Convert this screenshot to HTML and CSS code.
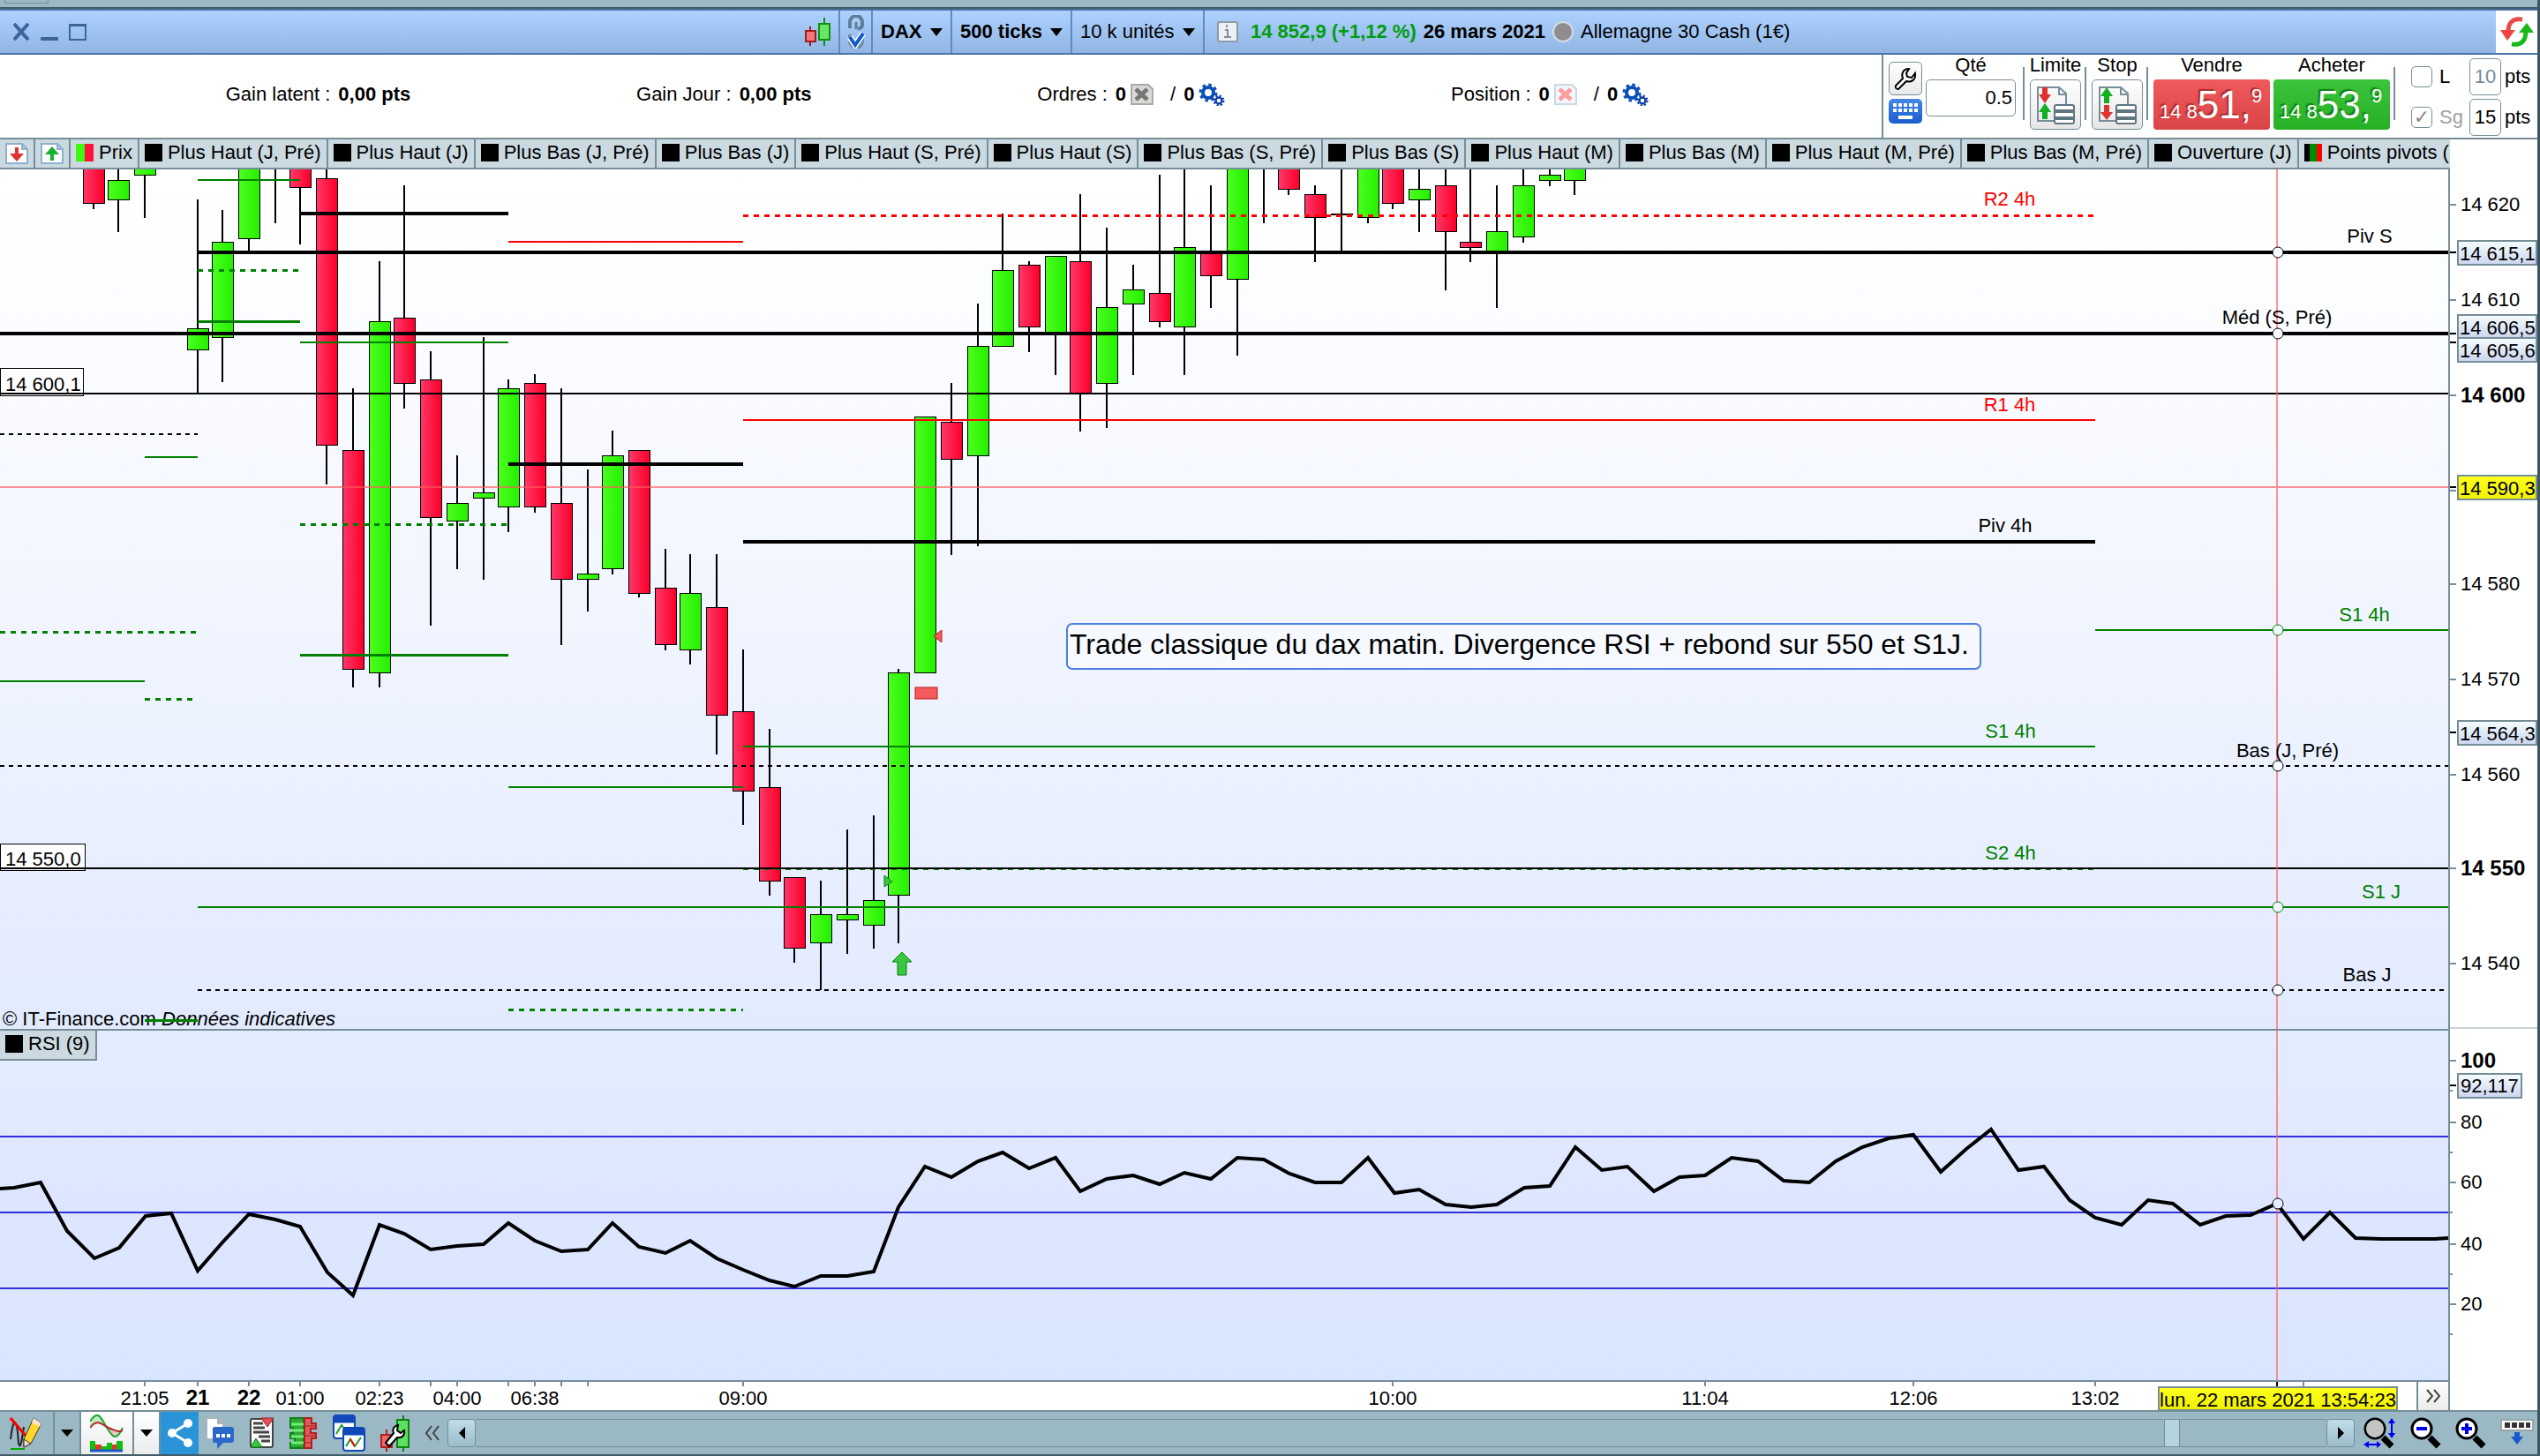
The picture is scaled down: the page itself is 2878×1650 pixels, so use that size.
FILE: index.html
```html
<!DOCTYPE html>
<html lang="fr">
<head>
<meta charset="utf-8">
<title>DAX - 500 ticks</title>
<link rel="stylesheet" href="styles.css">
</head>
<body>
<svg class="defs" width="0" height="0" aria-hidden="true">
  <defs>
    <symbol id="gears" viewBox="0 0 30 26">
      <circle cx="11" cy="11" r="6" fill="none" stroke="#0b4fb8" stroke-width="4"/>
      <circle cx="11" cy="11" r="9" fill="none" stroke="#0b4fb8" stroke-width="3" stroke-dasharray="3.5 3.57"/>
      <circle cx="23" cy="20" r="3.5" fill="none" stroke="#0b3fa8" stroke-width="2.5"/>
      <circle cx="23" cy="20" r="5.5" fill="none" stroke="#0b3fa8" stroke-width="2" stroke-dasharray="2.2 2.12"/>
    </symbol>
    <symbol id="magnifier" viewBox="0 0 36 36">
      <path d="M22 23 L32 33" stroke="#000" stroke-width="7"/>
      <circle cx="13" cy="13" r="11" fill="#fff" stroke="#000" stroke-width="3"/>
    </symbol>
    <linearGradient id="up"><stop offset="0" stop-color="#4eff20"/><stop offset="1" stop-color="#24f000"/></linearGradient>
    <linearGradient id="down"><stop offset="0" stop-color="#ff3a6c"/><stop offset="1" stop-color="#fb0028"/></linearGradient>
    <linearGradient id="priceBg" x2="0" y2="1"><stop offset="0" stop-color="#ffffff"/><stop offset=".25" stop-color="#f9fbff"/><stop offset=".6" stop-color="#eef3ff"/><stop offset="1" stop-color="#e2eafe"/></linearGradient>
    <linearGradient id="rsiBg" x2="0" y2="1"><stop offset="0" stop-color="#e3edff"/><stop offset=".5" stop-color="#dee6ff"/><stop offset="1" stop-color="#d9e5ff"/></linearGradient>
    <linearGradient id="tagBg" x2="0" y2="1"><stop offset="0" stop-color="#f6fdff"/><stop offset="1" stop-color="#cbd5ef"/></linearGradient>
    <linearGradient id="yellowBg" x2="0" y2="1"><stop offset="0" stop-color="#ffff20"/><stop offset="1" stop-color="#f0f000"/></linearGradient>
  </defs>
</svg>

<div class="app">
  <div class="strip"><span class="strip-tab"></span></div>

  <header class="titlebar">
    <div class="win-buttons">
      <button class="win-btn" aria-label="Fermer"><svg width="20" height="20"><path d="M2 1 L18 19 M18 1 L2 19" stroke="#3a6599" stroke-width="4"/></svg></button>
      <button class="win-btn" aria-label="Réduire"><svg width="20" height="20"><rect y="16" width="20" height="4" rx="1" fill="#3a6599"/></svg></button>
      <button class="win-btn" aria-label="Agrandir"><svg width="20" height="20"><path d="M1 2 H19 V19 H1 Z M1 3 H19" fill="none" stroke="#3a6599" stroke-width="2"/></svg></button>
    </div>
    <button class="candle-btn" aria-label="Style du graphique"><svg width="30" height="32"><path d="M7 10 V32" stroke="#a01c1c" stroke-width="2"/><rect x="2" y="15" width="11" height="12" fill="#f07878" stroke="#a01c1c" stroke-width="2"/><path d="M23 0 V32" stroke="#109010" stroke-width="2"/><rect x="17" y="7" width="12" height="18" fill="#66e866" stroke="#109010" stroke-width="2"/></svg></button>
    <button class="cell chain" aria-label="Lier"><svg width="24" height="38"><path d="M5 15 V8 A6 6 0 0 1 19 8 V12 A4 4 0 0 1 14 15" fill="none" stroke="#5f7e9c" stroke-width="4"/><path d="M12 8 V16" stroke="#5f7e9c" stroke-width="3"/><path d="M5 22 V30 A6 6 0 0 0 19 30 V22" fill="none" stroke="#6f8eac" stroke-width="4"/><path d="M5 25 L11 34 L20 21" fill="none" stroke="#fff" stroke-width="7"/><path d="M5 25 L11 34 L20 21" fill="none" stroke="#1458d0" stroke-width="4"/></svg></button>
    <label class="cell drop bold"><select aria-label="Valeur"><option>DAX</option></select></label>
    <label class="cell drop bold"><select aria-label="Unité de temps"><option>500 ticks</option></select></label>
    <label class="cell drop"><select aria-label="Nombre d'unités"><option>10 k unités</option></select></label>
    <div class="cell quote">
      <svg width="24" height="24"><rect x="1" y="1" width="22" height="22" rx="2" fill="#eef1f4" stroke="#8c9aa5" stroke-width="2"/><path d="M9 10 H12 V18 M8 18 H16 M11 4 V7" fill="none" stroke="#7d8f9c" stroke-width="2"/></svg>
      <b class="gain">14 852,9 (+1,12 %)</b>
      <b>26 mars 2021</b>
      <span class="market">Allemagne 30 Cash (1€)</span>
    </div>
    <button class="refresh" aria-label="Actualiser"><svg width="40" height="34"><path d="M26 3 C14 1 10 8 10 17" fill="none" stroke="#e84a4a" stroke-width="5"/><path d="M1 15 H18 L9 27 Z" fill="#ee4444"/><path d="M14 31 C26 33 30 26 30 16" fill="none" stroke="#18b818" stroke-width="5"/><path d="M22 18 H39 L31 7 Z" fill="#18b818"/></svg></button>
  </header>

  <section class="account">
    <div class="stats">
      <p>Gain latent : <b>0,00 pts</b></p>
      <p>Gain Jour : <b>0,00 pts</b></p>
      <p>Ordres : <b>0</b>
        <button class="mini" aria-label="Annuler les ordres"><svg width="26" height="24"><path d="M1 1 H20 L25 6 V23 H1 Z" fill="#d9dad6" stroke="#aaaba6" stroke-width="2"/><path d="M6 6 L19 18 M19 6 L6 18" stroke="#777" stroke-width="5"/></svg></button>
        <span class="slash">/</span> <b>0</b><svg width="30" height="26"><use href="#gears"/></svg></p>
      <p>Position : <b>0</b>
        <button class="mini" aria-label="Clôturer la position"><svg width="26" height="24"><path d="M1 1 H20 L25 6 V23 H1 Z" fill="#f3f7fb" stroke="#c8dae6" stroke-width="2"/><path d="M6 6 L19 18 M19 6 L6 18" stroke="#ff9d9d" stroke-width="5"/></svg></button>
        <span class="slash">/</span> <b>0</b><svg width="30" height="26"><use href="#gears"/></svg></p>
    </div>
    <form class="trade">
      <div class="tools">
        <button type="button" class="tool" aria-label="Réglages"><svg width="26" height="26"><path d="M17 2 C10 2 8 8 10 13 L2 21 Q1 25 5 25 L14 16 C20 18 25 14 24 7 L20 12 L15 11 L14 7 Z" fill="#fff" stroke="#000" stroke-width="2"/></svg></button>
        <button type="button" class="tool keyboard" aria-label="Clavier"><svg width="30" height="20"><path d="M1 3 H30 M1 9 H30" stroke="#fff" stroke-width="4" stroke-dasharray="4 2"/><path d="M7 17 H23" stroke="#fff" stroke-width="4"/></svg></button>
      </div>
      <div class="field"><label for="qty">Qté</label><input id="qty" class="qty" value="0.5"></div>
      <span class="rule first"></span>
      <div class="field"><label for="lim">Limite</label><button id="lim" type="button" class="order"><svg width="44" height="44"><path d="M2 2 H26 L34 9 V40 H2 Z M26 2 V10 H34" fill="none" stroke="#768e98" stroke-width="2"/><path d="M10 2 V12" stroke="#e03030" stroke-width="6"/><path d="M3 10 H17 L10 20 Z" fill="#e03030"/><path d="M10 28 V38" stroke="#10b020" stroke-width="6"/><path d="M3 30 H17 L10 20 Z" fill="#10b020"/><rect x="21" y="22" width="22" height="21" rx="2" fill="#fff" stroke="#5f7681" stroke-width="2"/><path d="M21 29 H43 M21 37 H43" stroke="#5f7681" stroke-width="4"/></svg></button></div>
      <span class="rule"></span>
      <div class="field"><label for="stp">Stop</label><button id="stp" type="button" class="order"><svg width="44" height="44"><path d="M2 2 H26 L34 9 V40 H2 Z M26 2 V10 H34" fill="none" stroke="#768e98" stroke-width="2"/><path d="M10 10 V20" stroke="#10b020" stroke-width="6"/><path d="M3 12 H17 L10 2 Z" fill="#10b020"/><path d="M10 22 V32" stroke="#e03030" stroke-width="6"/><path d="M3 30 H17 L10 39 Z" fill="#e03030"/><rect x="21" y="22" width="22" height="21" rx="2" fill="#fff" stroke="#5f7681" stroke-width="2"/><path d="M21 29 H43 M21 37 H43" stroke="#5f7681" stroke-width="4"/></svg></button></div>
      <span class="rule"></span>
      <div class="field"><label for="sell">Vendre</label><button id="sell" type="button" class="deal sell"><small>14 8</small><span>51,</span><sup>9</sup></button></div>
      <div class="field"><label for="buy">Acheter</label><button id="buy" type="button" class="deal buy"><small>14 8</small><span>53,</span><sup>9</sup></button></div>
      <span class="rule"></span>
      <div class="guards">
        <div class="guard"><label><input type="checkbox">L</label><input class="pts dim" value="10" aria-label="Limite en points"><span>pts</span></div>
        <div class="guard"><label class="off"><input type="checkbox" checked>Sg</label><input class="pts" value="15" aria-label="Stop en points"><span>pts</span></div>
      </div>
    </form>
  </section>

  <nav class="legend">
    <button class="doc" aria-label="Réduire les prix"><svg width="26" height="24"><path d="M1 1 H19 L25 7 V23 H1 Z M19 1 V7 H25" fill="#fff" stroke="#8fb0cf" stroke-width="2"/><path d="M13 5 V13" stroke="#e03030" stroke-width="4"/><path d="M5 12 H21 L13 21 Z" fill="#e03030"/></svg></button>
    <button class="doc" aria-label="Agrandir les prix"><svg width="26" height="24"><path d="M1 1 H19 L25 7 V23 H1 Z M19 1 V7 H25" fill="#fff" stroke="#8fb0cf" stroke-width="2"/><path d="M13 11 V20" stroke="#18b030" stroke-width="4"/><path d="M5 13 H21 L13 4 Z" fill="#18b030"/></svg></button>
    <button><i class="price"></i>Prix</button>
    <button><i></i>Plus Haut (J, Pré)</button>
    <button><i></i>Plus Haut (J)</button>
    <button><i></i>Plus Bas (J, Pré)</button>
    <button><i></i>Plus Bas (J)</button>
    <button><i></i>Plus Haut (S, Pré)</button>
    <button><i></i>Plus Haut (S)</button>
    <button><i></i>Plus Bas (S, Pré)</button>
    <button><i></i>Plus Bas (S)</button>
    <button><i></i>Plus Haut (M)</button>
    <button><i></i>Plus Bas (M)</button>
    <button><i></i>Plus Haut (M, Pré)</button>
    <button><i></i>Plus Bas (M, Pré)</button>
    <button><i></i>Ouverture (J)</button>
    <button><i class="pivots"></i>Points pivots (</button>
  </nav>

  <main class="chart">
    <svg class="pane" viewBox="0 192 2875 974" role="img" aria-label="Cours du DAX">
      <rect y="192" width="2775" height="974" fill="url(#priceBg)"/>
      <text x="3" y="1162">© IT-Finance.com <tspan font-style="italic">Données indicatives</tspan></text>
      <g class="crisp">
        <path class="wick" d="M106 192V237M134 192V263M164 192V247M224 226V445M252 238V433M282 192V285M312 192V253M340 192V277M370 192V549M400 440V779M430 296V779M458 210V463M488 398V709M518 516V645M548 382V657M576 430V603M606 424V581M636 440V731M666 532V693M694 488V651M724 510V677M754 622V737M782 628V753M812 628V855M842 736V935M872 826V1015M900 994V1091M930 998V1122M960 940V1081M990 924V1075M1018 758V1069M1078 434V629M1108 344V619M1136 242V392M1166 296V399M1196 290V425M1224 220V489M1254 258V485M1284 300V425M1314 198V371M1342 192V425M1372 210V349M1402 192V403M1432 192V253M1460 192V221M1490 210V297M1520 192V284M1550 192V253M1578 192V237M1608 192V263M1638 192V329M1666 192V297M1696 210V349M1726 192V275M1756 192V211M1784 192V221"/>
        <g class="up">
          <rect x="122" y="204" width="24" height="22"/><rect x="152" y="180" width="24" height="18"/><rect x="212" y="372" width="24" height="24"/><rect x="240" y="274" width="24" height="108"/><rect x="270" y="180" width="24" height="90"/><rect x="418" y="364" width="24" height="398"/><rect x="506" y="570" width="24" height="20"/><rect x="536" y="558" width="24" height="6"/><rect x="564" y="440" width="24" height="134"/><rect x="654" y="650" width="24" height="6"/><rect x="682" y="516" width="24" height="128"/><rect x="770" y="672" width="24" height="64"/><rect x="918" y="1036" width="24" height="32"/><rect x="948" y="1036" width="24" height="6"/><rect x="978" y="1020" width="24" height="28"/><rect x="1006" y="762" width="24" height="252"/><rect x="1036" y="472" width="24" height="290"/><rect x="1096" y="392" width="24" height="124"/><rect x="1124" y="306" width="24" height="86"/><rect x="1184" y="290" width="24" height="86"/><rect x="1242" y="348" width="24" height="86"/><rect x="1272" y="328" width="24" height="16"/><rect x="1330" y="280" width="24" height="90"/><rect x="1390" y="180" width="24" height="136"/><rect x="1538" y="180" width="24" height="66"/><rect x="1596" y="214" width="24" height="12"/><rect x="1684" y="262" width="24" height="23"/><rect x="1714" y="210" width="24" height="58"/><rect x="1744" y="198" width="24" height="6"/><rect x="1772" y="180" width="24" height="24"/>
        </g>
        <g class="down">
          <rect x="94" y="180" width="24" height="50"/><rect x="328" y="180" width="24" height="32"/><rect x="358" y="202" width="24" height="302"/><rect x="388" y="510" width="24" height="248"/><rect x="446" y="360" width="24" height="74"/><rect x="476" y="430" width="24" height="156"/><rect x="594" y="434" width="24" height="140"/><rect x="624" y="570" width="24" height="86"/><rect x="712" y="510" width="24" height="162"/><rect x="742" y="666" width="24" height="64"/><rect x="800" y="688" width="24" height="122"/><rect x="830" y="806" width="24" height="90"/><rect x="860" y="892" width="24" height="106"/><rect x="888" y="994" width="24" height="80"/><rect x="1066" y="478" width="24" height="42"/><rect x="1154" y="300" width="24" height="70"/><rect x="1212" y="296" width="24" height="149"/><rect x="1302" y="332" width="24" height="32"/><rect x="1360" y="286" width="24" height="26"/><rect x="1448" y="180" width="24" height="34"/><rect x="1478" y="220" width="24" height="26"/><rect x="1508" y="242" width="24" height="1"/><rect x="1566" y="180" width="24" height="50"/><rect x="1626" y="210" width="24" height="52"/><rect x="1654" y="274" width="24" height="6"/>
        </g>
        <g fill="none" stroke="#008000">
          <path stroke-width="2" d="M224 204H340M340 388H576M164 518H224M0 772H164M842 846H2374M576 892H842M224 1028H2775M2374 714H2775"/>
          <path stroke-width="3" d="M224 364.5H340M340 742.5H576M164 1156.5H224"/>
          <path stroke-width="3" stroke-dasharray="6 6" d="M224 306.5H340M340 594.5H576M0 716.5H224M164 792.5H219M576 1144.5H842"/>
          <path stroke-width="2" stroke-dasharray="6 6" d="M842 985H2374"/>
        </g>
        <g fill="none" stroke="#ff0000">
          <path stroke-width="2" d="M576 274H842M842 476H2374"/>
          <path stroke-width="3" stroke-dasharray="6 6" d="M842 244.5H2374"/>
        </g>
        <g fill="none" stroke="#000">
          <path stroke-width="4" d="M340 242H576M224 286H2775M0 378H2775M576 526H842M842 614H2374"/>
          <path stroke-width="2" stroke-dasharray="5 5" d="M0 492H224M0 868H2775M224 1122H2775"/>
        </g>
      </g>
      <g class="crisp">
        <rect x="0" y="417" width="94" height="31" fill="#fff" stroke="#000"/>
        <rect x="0" y="956" width="96" height="30" fill="#fff" stroke="#000"/>
        <path d="M0 446H2775M0 984H2775" stroke="#000" stroke-width="2"/>
        <path d="M0 552H2775M2580 192V1166" stroke="#ff5a5a" stroke-opacity=".65" stroke-width="2"/>
      </g>
      <text x="6" y="443">14 600,1</text>
      <text x="6" y="981">14 550,0</text>

      <g fill="#f25a5e" stroke="#c01818" stroke-width="1"><path d="M1058 721 L1067 714 V728 Z"/><rect x="1037" y="779" width="25" height="13"/></g>
      <g fill="#38c840" stroke="#0a7a10"><path d="M1002 992 V1005 L1011 999 Z"/><path d="M1022 1079 L1033 1090 H1027 V1105 H1017 V1090 H1011 Z"/></g>

      <rect x="1209" y="707" width="1035" height="51" rx="6" fill="#f6f9ff" stroke="#4c7fe0" stroke-width="2"/>
      <text class="note" x="1212" y="741">Trade classique du dax matin. Divergence RSI + rebond sur 550 et S1J.</text>

      <g text-anchor="middle">
        <g fill="#ff0000"><text x="2277" y="233">R2 4h</text><text x="2277" y="466">R1 4h</text></g>
        <g fill="#008000"><text x="2278" y="836">S1 4h</text><text x="2278" y="974">S2 4h</text><text x="2679" y="704">S1 4h</text><text x="2698" y="1018">S1 J</text></g>
        <text x="2272" y="603">Piv 4h</text><text x="2685" y="275">Piv S</text><text x="2580" y="367">Méd (S, Pré)</text><text x="2592" y="858">Bas (J, Pré)</text><text x="2682" y="1112">Bas J</text>
      </g>
      <g fill="#f6f9ff" stroke="#000"><circle cx="2581" cy="286" r="6"/><circle cx="2581" cy="378" r="6"/><circle cx="2581" cy="868" r="6"/><circle cx="2581" cy="1122" r="6"/></g>
      <g fill="#f0f5ff" stroke="#008000"><circle cx="2581" cy="714" r="6"/><circle cx="2581" cy="1028" r="6"/></g>

      <g class="crisp">
        <path d="M2775 192V1166M2776 232H2783M2776 340H2783M2776 448H2783M2776 556H2783M2776 662H2783M2776 770H2783M2776 878H2783M2776 984H2783M2776 1092H2783" stroke="#768e98" stroke-width="2"/>
        <path d="M2776 286H2783M2776 378H2783M2776 388H2783M2776 552H2783M2776 830H2783" stroke="#000" stroke-width="2"/>
        <path d="M2776 1165H2875" stroke="#c8d3d7" stroke-width="2"/>
        <g fill="url(#tagBg)" stroke="#768e98" stroke-width="2">
          <rect x="2785" y="273" width="89" height="27"/><rect x="2785" y="357" width="89" height="26"/><rect x="2785" y="383" width="89" height="27"/><rect x="2785" y="817" width="89" height="27"/>
          <rect x="2785" y="539" width="89" height="27" fill="url(#yellowBg)"/>
        </g>
      </g>
      <text x="2788" y="239">14 620</text><text x="2788" y="347">14 610</text><text x="2788" y="669">14 580</text><text x="2788" y="777">14 570</text><text x="2788" y="885">14 560</text><text x="2788" y="1099">14 540</text>
      <text x="2787" y="295">14 615,1</text><text x="2787" y="379">14 606,5</text><text x="2787" y="405">14 605,6</text><text x="2787" y="561">14 590,3</text><text x="2787" y="839">14 564,3</text>
      <text class="strong" x="2788" y="456">14 600</text><text class="strong" x="2788" y="992">14 550</text>
    </svg>

    <div class="rsi">
      <svg class="pane" viewBox="0 1166 2875 400" role="img" aria-label="RSI">
        <rect y="1166" width="2775" height="400" fill="url(#rsiBg)"/>
        <g class="crisp">
          <path d="M0 1167H2775M2775 1166V1566M0 1565H2776" stroke="#768e98" stroke-width="2"/>
          <path d="M0 1288H2774M0 1374H2774M0 1460H2774" stroke="#3030d8" stroke-width="2"/>
          <path d="M2580 1168V1564" stroke="#ff5a5a" stroke-opacity=".65" stroke-width="2"/>
          <path d="M2776 1202H2783M2776 1272H2783M2776 1340H2783M2776 1410H2783M2776 1478H2783M2776 1236H2779M2776 1306H2779M2776 1374H2779M2776 1444H2779M2776 1512H2779" stroke="#768e98" stroke-width="2"/>
          <path d="M2776 1230H2783" stroke="#000" stroke-width="2"/>
          <rect x="2785" y="1217" width="72" height="27" fill="url(#tagBg)" stroke="#768e98" stroke-width="2"/>
        </g>
        <polyline fill="none" stroke="#000" stroke-width="4" points="0,1347 16,1346 46,1340 76,1395 107,1426 135,1414 165,1378 194,1375 224,1440 252,1408 282,1376 312,1382 340,1390 371,1442 400,1468 430,1388 458,1398 488,1416 518,1412 548,1410 576,1386 606,1406 636,1418 666,1416 694,1386 724,1413 754,1420 782,1406 812,1426 842,1439 872,1451 900,1458 930,1446 960,1446 990,1441 1018,1368 1048,1322 1078,1334 1108,1316 1136,1306 1166,1324 1196,1312 1224,1350 1254,1336 1284,1332 1314,1342 1342,1329 1372,1336 1402,1312 1432,1314 1461,1330 1490,1340 1520,1340 1550,1312 1580,1352 1608,1348 1638,1365 1667,1368 1696,1365 1727,1346 1756,1344 1785,1300 1815,1326 1844,1322 1874,1350 1903,1334 1932,1332 1962,1312 1992,1316 2021,1338 2050,1340 2080,1316 2110,1300 2140,1290 2168,1286 2199,1328 2228,1302 2256,1280 2287,1326 2316,1322 2345,1360 2374,1380 2404,1388 2434,1360 2462,1364 2493,1388 2522,1378 2550,1377 2580,1364 2610,1404 2640,1374 2669,1403 2698,1404 2759,1404 2774,1403"/>
        <circle cx="2581" cy="1364" r="6" fill="#e6edff" stroke="#000"/>
        <text class="strong" x="2788" y="1210">100</text>
        <text x="2788" y="1238">92,117</text><text x="2788" y="1279">80</text><text x="2788" y="1347">60</text><text x="2788" y="1417">40</text><text x="2788" y="1485">20</text>
      </svg>
      <button class="rsi-tag"><i></i>RSI (9)</button>
    </div>

    <div class="time">
      <svg class="time-scale" viewBox="0 1566 2738 32" role="img" aria-label="Échelle de temps">
        <path class="crisp" d="M164 1566V1571M224 1566V1571M282 1566V1571M340 1566V1571M430 1566V1571M488 1566V1571M518 1566V1571M576 1566V1571M606 1566V1571M636 1566V1571M666 1566V1571M842 1566V1571M1578 1566V1571M1932 1566V1571M2168 1566V1571M2374 1566V1571M2610 1566V1571" stroke="#768e98" stroke-width="2"/>
        <path class="crisp" d="M2580 1566V1571" stroke="#000" stroke-width="2"/>
        <rect class="crisp" x="2446" y="1572" width="270" height="26" fill="url(#yellowBg)" stroke="#768e98" stroke-width="2"/>
        <g text-anchor="middle">
          <text x="164" y="1592">21:05</text><text class="strong" x="224" y="1592">21</text><text class="strong" x="282" y="1592">22</text><text x="340" y="1592">01:00</text><text x="430" y="1592">02:23</text><text x="518" y="1592">04:00</text><text x="606" y="1592">06:38</text><text x="842" y="1592">09:00</text><text x="1578" y="1592">10:00</text><text x="1932" y="1592">11:04</text><text x="2168" y="1592">12:06</text><text x="2374" y="1592">13:02</text><text x="2581" y="1594">lun. 22 mars 2021 13:54:23</text>
        </g>
      </svg>
      <button class="jump" aria-label="Aller à la fin"><svg width="18" height="16"><path d="M2 1 L8 8 L2 15 M10 1 L16 8 L10 15" fill="none" stroke="#444" stroke-width="2"/></svg></button>
    </div>
  </main>

  <footer class="toolbar">
    <button class="tb draw" aria-label="Dessiner"><svg width="38" height="38"><path d="M1 26 C4 0 8 0 10 30 C12 40 14 26 16 12" fill="none" stroke="#222" stroke-width="2"/><path d="M1 2 L18 22" stroke="#f00" stroke-width="3"/><path d="M1 37 H17" stroke="#0a0" stroke-width="2"/><path d="M27 2 L36 8 L24 31 L16 35 V26 Z" fill="#ffd728" stroke="#333" stroke-width="1"/><path d="M27 2 L36 8 L34 12 L25 7 Z" fill="#f8e4d4"/><path d="M16 35 V26 L24 31 Z" fill="#f5dfc6" stroke="#333"/></svg></button>
    <button class="tb arrow" aria-label="Outils de dessin"><span class="tri"></span></button>
    <button class="tb white indic" aria-label="Indicateurs"><svg width="38" height="44"><path d="M0 12 C4 2 8 -2 12 4 L17 12 Q8 8 0 16 Z" fill="#bfe8c4"/><path d="M18 13 Q26 18 34 20 Q27 34 18 13" fill="#f5c4c8"/><path d="M0 9 C9 -5 12 4 18 14 S29 34 37 16" fill="none" stroke="#18a828" stroke-width="2"/><path d="M0 16 C9 4 15 14 23 17 S32 21 37 19" fill="none" stroke="#b02828" stroke-width="2"/><path d="M0 31 H6 V41 H0 Z M13 37 H19 V41 H13 Z M19 33 H25 V41 H19 Z M30 31 H37 V41 H30 Z" fill="#10c010"/><path d="M6 35 H13 V41 H6 Z M25 35 H30 V41 H25 Z" fill="#e83030"/><path d="M0 42 H37" stroke="#1858c8" stroke-width="3"/></svg></button>
    <button class="tb white arrow" aria-label="Liste des indicateurs"><span class="tri"></span></button>
    <button class="tb share" aria-label="Partager"><svg width="30" height="34"><path d="M24 6 L6 17 L24 28" fill="none" stroke="#fff" stroke-width="3"/><circle cx="24" cy="6" r="5" fill="#fff"/><circle cx="6" cy="17" r="5" fill="#fff"/><circle cx="24" cy="28" r="5" fill="#fff"/></svg></button>
    <div class="icons">
      <button aria-label="Commentaires"><svg width="34" height="38"><path d="M1 2 H14 L20 8 V26 H1 Z M14 2 V8 H20" fill="#fff" stroke="#aab4ba" stroke-width="2"/><path d="M10 12 H29 Q32 12 32 15 V27 Q32 30 29 30 H20 L13 37 V30 H10 Q8 30 8 27 V15 Q8 12 10 12" fill="#2a68cc"/><path d="M12 22 H29" stroke="#fff" stroke-width="4" stroke-dasharray="4 2"/></svg></button>
      <button aria-label="Rapport"><svg width="28" height="36"><rect x="1" y="2" width="25" height="32" rx="2" fill="#fff" stroke="#444" stroke-width="2"/><path d="M4 7 H15 M4 12 H17 M4 17 H22 M10 22 H23 M13 27 H23" stroke="#444" stroke-width="3"/><path d="M13 1 H27 L20 11 Z" fill="#e05058" stroke="#a01820"/><path d="M1 34 H14 L7 24 Z" fill="#38c840" stroke="#0a7a10"/></svg></button>
      <button aria-label="Carnet d'ordres"><svg width="34" height="38"><path d="M2 2 H17 V36 H2 V30 H7 V25 H2 V19 H5 V13 H2 Z" fill="#30a838" stroke="#108018" stroke-width="2"/><path d="M18 2 H26 V8 H31 V14 H25 V19 H31 V25 H26 V36 H18 Z" fill="#e05c5c" stroke="#b02020" stroke-width="2"/><path d="M3 9 H17 M3 16 H17 M3 23 H17 M3 30 H17" stroke="#6bf070" stroke-width="3"/><path d="M18 11 H30 M18 22 H30 M18 30 H26" stroke="#a01818" stroke-width="1"/></svg></button>
      <button aria-label="Fenêtres"><svg width="38" height="42"><g fill="#fff" stroke="#0f48b8" stroke-width="2"><rect x="1" y="1" width="24" height="26" rx="3"/><path d="M2 5 H24" stroke-width="9"/></g><path d="M4 22 L10 12 L13 16" fill="none" stroke="#18a028" stroke-width="2"/><g fill="#fff" stroke="#0f48b8" stroke-width="2"><rect x="12" y="15" width="24" height="26" rx="3"/><path d="M13 19 H35" stroke-width="9"/></g><path d="M15 36 L20 28 L25 36 L32 26" fill="none" stroke="#18a028" stroke-width="2"/><path d="M20 28 L25 36" stroke="#f00" stroke-width="2"/></svg></button>
      <button aria-label="Réglages des bougies"><svg width="34" height="42"><path d="M7 17 V42" stroke="#b02020" stroke-width="2"/><rect x="1" y="23" width="12" height="14" fill="#ee6868" stroke="#b02020" stroke-width="2"/><path d="M26 1 V42" stroke="#108018" stroke-width="2"/><rect x="19" y="6" width="13" height="31" fill="#5be060" stroke="#108018" stroke-width="2"/><path d="M20 12 C15 13 13 17 15 21 L6 32 L10 36 L19 26 C25 27 28 23 27 18 L23 21 L19 18 Z" fill="#fff" stroke="#000" stroke-width="2"/></svg></button>
      <button aria-label="Replier"><svg width="18" height="18"><path d="M8 1 L2 9 L8 17 M16 1 L10 9 L16 17" fill="none" stroke="#444" stroke-width="2"/></svg></button>
    </div>
    <div class="scroll">
      <button class="step" aria-label="Reculer"><span class="left"></span></button>
      <div class="track"><span class="thumb"></span></div>
      <button class="step" aria-label="Avancer"><span class="right"></span></button>
    </div>
    <div class="zooms">
      <button aria-label="Zoom automatique"><svg width="38" height="36"><use href="#magnifier" width="36" height="36"/><circle cx="13" cy="13" r="10" fill="#c4c4c4"/><path d="M32 5 V20 M6 31 H16" stroke="#0000f0" stroke-width="2"/><path d="M32 1 L36 7 H28 Z M32 24 L28 18 H36 Z M0 31 L6 27 V35 Z M20 31 L15 27 V35 Z" fill="#0000f0"/></svg></button>
      <button aria-label="Dézoomer"><svg width="36" height="36"><use href="#magnifier" width="36" height="36"/><path d="M7 13 H19" stroke="#0000f0" stroke-width="4"/></svg></button>
      <button aria-label="Zoomer"><svg width="36" height="36"><use href="#magnifier" width="36" height="36"/><path d="M7 13 H19 M13 7 V19" stroke="#0000f0" stroke-width="4"/></svg></button>
      <button aria-label="Masquer la barre"><svg width="38" height="32"><rect x="1" y="1" width="36" height="12" fill="#fff" stroke="#97a6ad" stroke-width="2"/><path d="M5 7 H34" stroke="#333" stroke-width="6" stroke-dasharray="6 2"/><path d="M19 15 V22" stroke="#1858c8" stroke-width="6"/><path d="M12 20 H26 L19 29 Z" fill="#1858c8"/></svg></button>
    </div>
  </footer>
</div>
</body>
</html>
```

FILE: styles.css
```css
* { box-sizing: border-box; }

body {
  margin: 0;
  background: #fff;
  color: #000;
  font: 22px/24px "Liberation Sans", Arial, sans-serif;
}

button, input, select {
  margin: 0;
  padding: 0;
  border: 0;
  background: none;
  color: inherit;
  font: inherit;
}

button { display: flex; align-items: center; justify-content: center; }
svg { display: block; flex: none; }
p { margin: 0; }
.defs { position: absolute; }
.crisp { shape-rendering: crispEdges; }

.app { border-right: 3px solid #3d5560; }

.strip { height: 10px; background: #9bb8c5; border-bottom: 2px solid #435c68; }
.strip-tab { display: block; width: 50px; height: 4px; margin-left: 5px; border: 1px solid #768e98; border-top: 0; border-radius: 0 0 3px 3px; }

/* Title bar */
.titlebar {
  display: flex;
  height: 52px;
  border-top: 2px solid #4a74a8;
  border-bottom: 2px solid #4a74a8;
  background: linear-gradient(#add2ff, #92b5e3);
}
.win-buttons { display: flex; align-items: center; gap: 12px; padding-left: 14px; width: 902px; }
.candle-btn { width: 48px; }
.cell { display: flex; align-items: center; border-left: 2px solid #5f8abf; }
.chain { width: 37px; }
.drop { padding: 0 9px; gap: 9px; }
.drop select { appearance: none; }
.drop::after { content: ""; border: 7px solid transparent; border-top: 9px solid #000; border-bottom: 0; }
.bold, .bold select { font-weight: bold; }
.quote { flex: 1; gap: 8px; padding-left: 14px; white-space: nowrap; }
.gain { color: #009c10; margin-left: 6px; }
.market { display: flex; align-items: center; gap: 8px; }
.market::before { content: ""; width: 20px; height: 20px; border: 2px solid #d5dbe2; border-radius: 50%; background: #8e8e8e; }
.refresh { width: 47px; background: #fff; }

/* Account and order entry */
.account { display: flex; height: 96px; border-bottom: 2px solid #768e98; background: #fff; }
.stats { display: flex; flex: 1; align-items: center; justify-content: space-evenly; padding: 0 8px 4px 0; }
.stats p { display: flex; align-items: center; gap: 9px; white-space: nowrap; }
.stats svg { margin-left: -4px; }
.slash { margin-left: 10px; }

.trade { display: flex; gap: 4px; width: 743px; padding-left: 6px; border-left: 2px solid #768e98; }
.tools { display: flex; flex-direction: column; gap: 4px; padding-top: 8px; }
.tool { width: 38px; height: 38px; border: 1px solid #768e98; border-radius: 5px; background: linear-gradient(#fff, #e8e8e8); }
.keyboard { height: 28px; border: 0; background: linear-gradient(#4488e8, #1c5ccc); }
.field { display: flex; flex-direction: column; align-items: center; gap: 4px; white-space: nowrap; }
.qty { width: 102px; height: 42px; padding-right: 3px; border: 1px solid #768e98; border-radius: 5px; background: #fff; text-align: right; }
.rule { width: 2px; margin: 14px 2px 20px 0; background: #768e98; }
.rule.first { margin-left: 4px; }
.order { width: 58px; height: 57px; border: 1px solid #768e98; border-radius: 5px; background: linear-gradient(#fff, #e6e6e6); }
.field:has(.order) { width: 58px; }
.deal { align-items: baseline; justify-content: flex-start; width: 132px; height: 57px; padding: 9px 0 0 7px; border-radius: 4px; color: #fff; }
.deal small { font-size: 22px; line-height: 40px; }
.deal span { font-size: 44px; line-height: 40px; }
.deal sup { align-self: flex-start; font-size: 22px; line-height: 20px; }
.sell { background: linear-gradient(#f05a5c, #da4446); text-shadow: -2px -2px 1px #a82c2e; }
.buy { background: linear-gradient(#3cc43c, #26b026); text-shadow: -2px -2px 1px #0f7f14; }

.guards { display: flex; flex-direction: column; gap: 4px; padding: 4px 0 0 12px; }
.guard { display: flex; align-items: center; gap: 4px; }
.guard label { display: flex; align-items: center; gap: 8px; width: 62px; }
.guard input[type="checkbox"] { appearance: none; display: grid; place-items: center; width: 24px; height: 24px; border: 1px solid #768e98; border-radius: 5px; }
.guard input:checked::after { content: "✓"; font: 22px/20px "DejaVu Sans", sans-serif; color: #888; }
.pts { width: 36px; height: 42px; border: 1px solid #768e98; border-radius: 5px; text-align: center; }
.off { color: #a0a0a0; }
.dim { color: #768e98; }

/* Indicator legend */
.legend { display: flex; height: 34px; margin-right: 99px; border-bottom: 2px solid #768e98; background: #cbd9e0; overflow: hidden; }
.legend button { flex: none; gap: 6px; padding: 0 6px 2px; border-right: 2px solid #768e98; white-space: nowrap; }
.legend .doc { width: 40px; padding: 0; }
.legend i, .rsi-tag i { flex: none; width: 20px; height: 20px; background: #000; }
.legend .price { background: linear-gradient(90deg, #3cf810 50%, #ff1038 50%); }
.legend .pivots { background: linear-gradient(90deg, #000 30%, #008a00 30% 70%, #f00 70%); }
.legend button:last-child { border-right: 0; }

/* Chart */
.pane { width: 100%; height: auto; }
.chart text { font-size: 22px; }
.chart .strong { font-size: 24px; font-weight: bold; }
.chart .note { font-size: 32px; }
.wick { fill: none; stroke: #000; stroke-width: 2; }
.up { fill: url(#up); stroke: #000; }
.down { fill: url(#down); stroke: #000; }
.rsi { position: relative; }
.rsi-tag { position: absolute; top: 2px; left: 0; gap: 6px; height: 34px; padding: 0 6px 2px; border-right: 2px solid #768e98; border-bottom: 2px solid #768e98; background: #cbd9e0; }

.time { display: flex; padding-right: 99px; background: #fff; }
.time-scale { flex: 1; min-width: 0; height: auto; }
.jump { width: 38px; border: 2px solid #768e98; border-width: 0 2px; background: linear-gradient(#fff, #ebebeb); }

/* Bottom toolbar */
.toolbar { display: flex; height: 52px; border-top: 2px solid #768e98; border-bottom: 2px solid #435c68; background: #9bb8c5; }
.tb { border-right: 2px solid #768e98; }
.white { background: linear-gradient(#fff, #ececec); }
.draw { width: 62px; }
.arrow { width: 30px; }
.indic { width: 60px; }
.share { width: 43px; border: 0; background: #2a94d8; }
.tri { border: 7px solid transparent; border-top: 8px solid #000; border-bottom: 0; }
.icons { display: flex; align-items: center; gap: 16px; padding: 0 8px; }
.scroll { display: flex; flex: 1; align-items: center; }
.step { width: 32px; height: 32px; border: 1px solid #768e98; border-radius: 4px; background: linear-gradient(#bfdde9, #9dbdcb); }
.left { border: 7px solid transparent; border-right: 7px solid #000; border-left: 0; }
.right { border: 7px solid transparent; border-left: 7px solid #000; border-right: 0; }
.track { display: flex; flex: 1; height: 32px; padding-right: 166px; justify-content: flex-end; border: 1px solid #768e98; border-width: 1px 0; }
.thumb { width: 18px; border: 1px solid #768e98; border-width: 0 1px; background: #b5d3e0; }
.zooms { display: flex; align-items: center; gap: 15px; padding: 0 4px 0 10px; }
```
